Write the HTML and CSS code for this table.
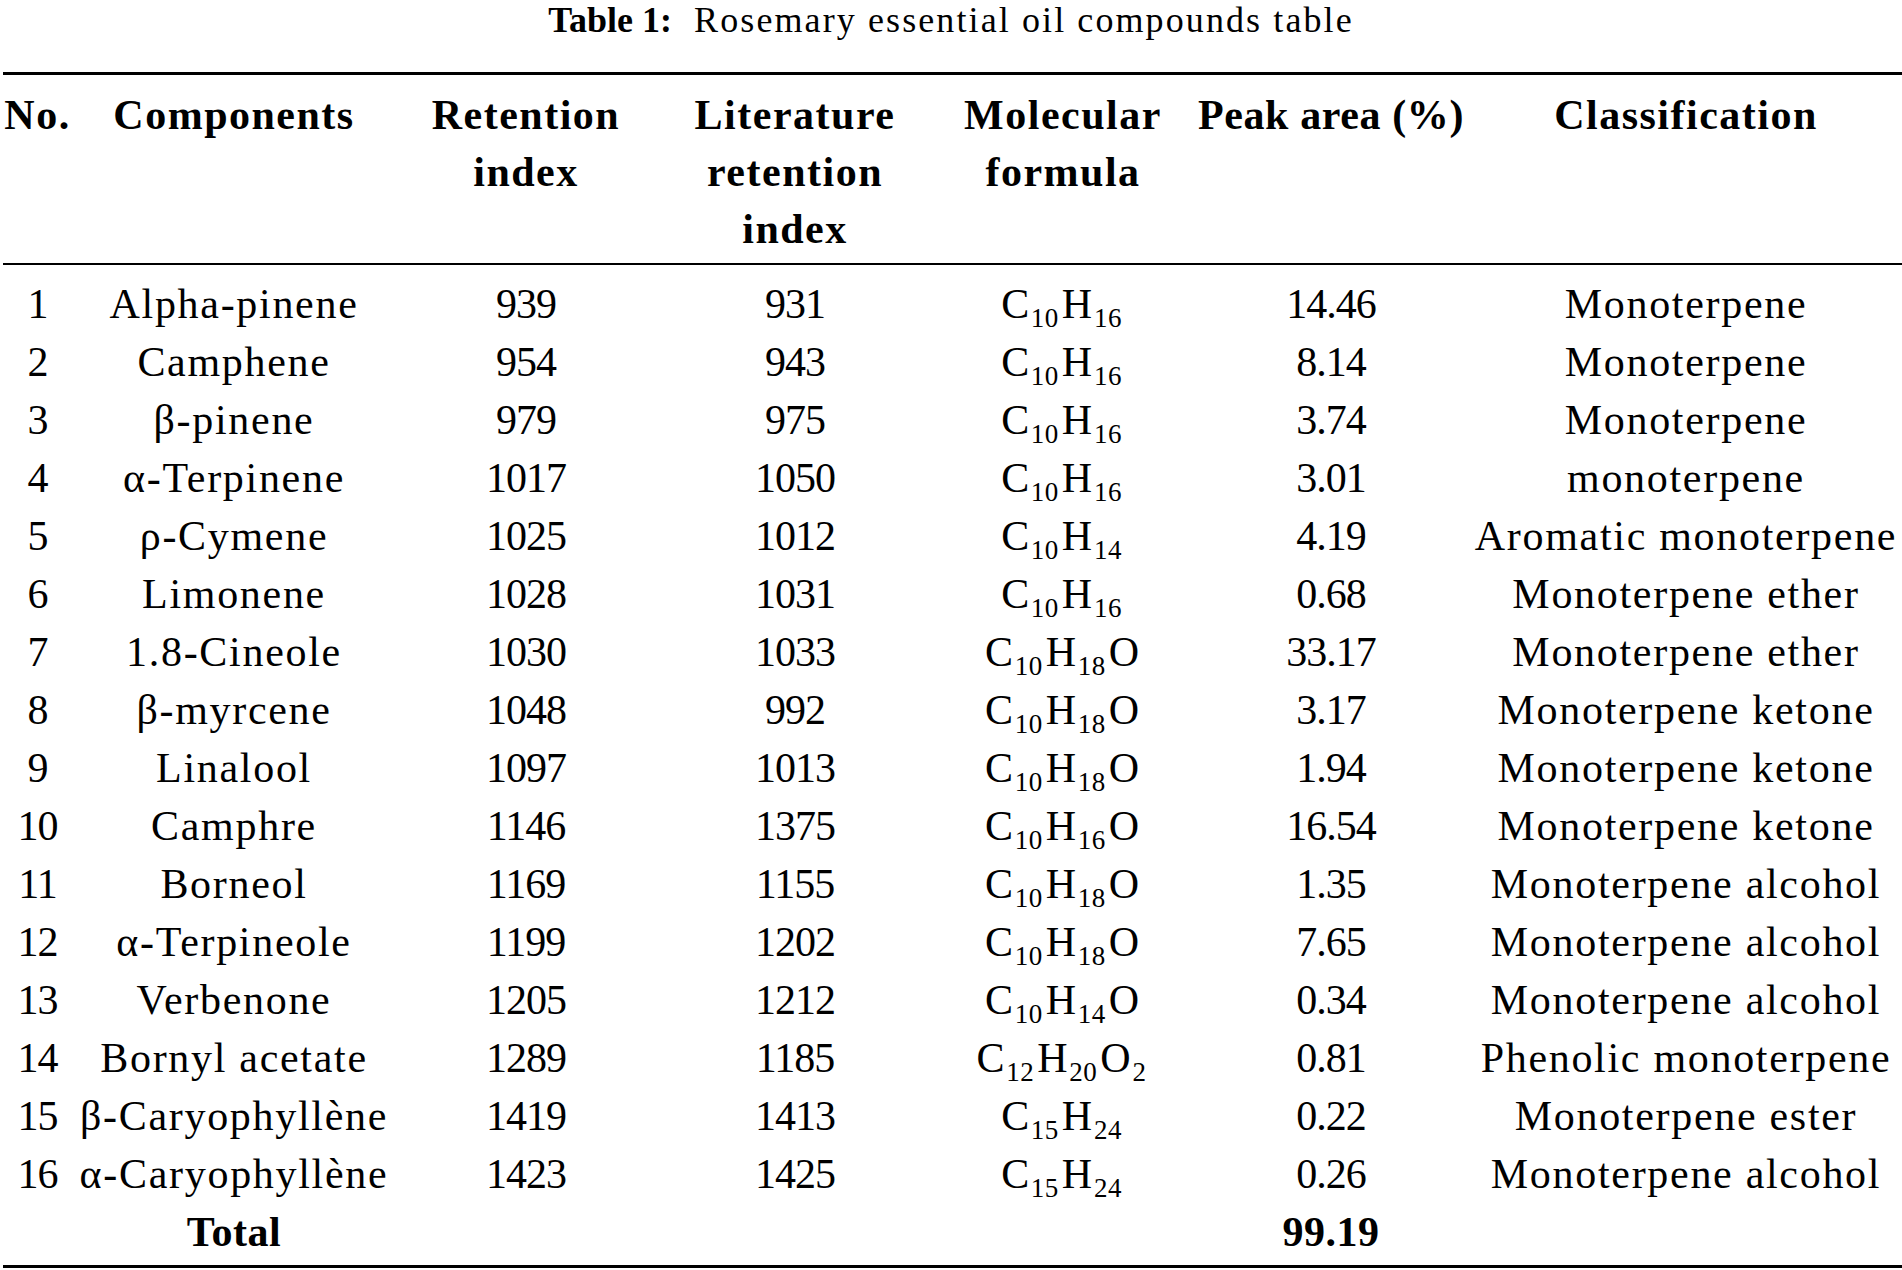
FILE: index.html
```html
<!DOCTYPE html>
<html lang="en">
<head>
<meta charset="utf-8">
<title>Table 1: Rosemary essential oil compounds table</title>
<link rel="stylesheet" href="styles.css">
</head>
<body>
<div class="page">
  <p class="caption"><b class="cap-label">Table 1:</b>&nbsp; Rosemary essential oil compounds table</p>
  <table class="tbl">
    <colgroup>
      <col class="c-no"><col class="c-comp"><col class="c-ri"><col class="c-lri"><col class="c-mf"><col class="c-pa"><col class="c-cl">
    </colgroup>
    <thead>
      <tr>
        <th>No.</th>
        <th>Components</th>
        <th>Retention<br>index</th>
        <th>Literature<br>retention<br>index</th>
        <th>Molecular<br>formula</th>
        <th class="th-peak">Peak area (%)</th>
        <th>Classification</th>
      </tr>
    </thead>
    <tbody>
      <tr><td>1</td><td>Alpha-pinene</td><td>939</td><td>931</td><td>C<sub>10</sub>H<sub>16</sub></td><td>14.46</td><td>Monoterpene</td></tr>
      <tr><td>2</td><td>Camphene</td><td>954</td><td>943</td><td>C<sub>10</sub>H<sub>16</sub></td><td>8.14</td><td>Monoterpene</td></tr>
      <tr><td>3</td><td>β-pinene</td><td>979</td><td>975</td><td>C<sub>10</sub>H<sub>16</sub></td><td>3.74</td><td>Monoterpene</td></tr>
      <tr><td>4</td><td>α-Terpinene</td><td>1017</td><td>1050</td><td>C<sub>10</sub>H<sub>16</sub></td><td>3.01</td><td>monoterpene</td></tr>
      <tr><td>5</td><td>ρ-Cymene</td><td>1025</td><td>1012</td><td>C<sub>10</sub>H<sub>14</sub></td><td>4.19</td><td>Aromatic monoterpene</td></tr>
      <tr><td>6</td><td>Limonene</td><td>1028</td><td>1031</td><td>C<sub>10</sub>H<sub>16</sub></td><td>0.68</td><td>Monoterpene ether</td></tr>
      <tr><td>7</td><td>1.8-Cineole</td><td>1030</td><td>1033</td><td>C<sub>10</sub>H<sub>18</sub>O</td><td>33.17</td><td>Monoterpene ether</td></tr>
      <tr><td>8</td><td>β-myrcene</td><td>1048</td><td>992</td><td>C<sub>10</sub>H<sub>18</sub>O</td><td>3.17</td><td>Monoterpene ketone</td></tr>
      <tr><td>9</td><td>Linalool</td><td>1097</td><td>1013</td><td>C<sub>10</sub>H<sub>18</sub>O</td><td>1.94</td><td>Monoterpene ketone</td></tr>
      <tr><td>10</td><td>Camphre</td><td>1146</td><td>1375</td><td>C<sub>10</sub>H<sub>16</sub>O</td><td>16.54</td><td>Monoterpene ketone</td></tr>
      <tr><td>11</td><td>Borneol</td><td>1169</td><td>1155</td><td>C<sub>10</sub>H<sub>18</sub>O</td><td>1.35</td><td>Monoterpene alcohol</td></tr>
      <tr><td>12</td><td>α-Terpineole</td><td>1199</td><td>1202</td><td>C<sub>10</sub>H<sub>18</sub>O</td><td>7.65</td><td>Monoterpene alcohol</td></tr>
      <tr><td>13</td><td>Verbenone</td><td>1205</td><td>1212</td><td>C<sub>10</sub>H<sub>14</sub>O</td><td>0.34</td><td>Monoterpene alcohol</td></tr>
      <tr><td>14</td><td>Bornyl acetate</td><td>1289</td><td>1185</td><td>C<sub>12</sub>H<sub>20</sub>O<sub>2</sub></td><td>0.81</td><td>Phenolic monoterpene</td></tr>
      <tr><td>15</td><td>β-Caryophyllène</td><td>1419</td><td>1413</td><td>C<sub>15</sub>H<sub>24</sub></td><td>0.22</td><td>Monoterpene ester</td></tr>
      <tr><td>16</td><td>α-Caryophyllène</td><td>1423</td><td>1425</td><td>C<sub>15</sub>H<sub>24</sub></td><td>0.26</td><td>Monoterpene alcohol</td></tr>
      <tr class="total"><td></td><td>Total</td><td></td><td></td><td></td><td>99.19</td><td></td></tr>
    </tbody>
  </table>
</div>
</body>
</html>
```
FILE: styles.css
```css
html, body {
  margin: 0;
  padding: 0;
  background: #ffffff;
  color: #000000;
  font-family: "Liberation Serif", "Times New Roman", serif;
}

.page {
  width: 1902px;
}

.caption {
  margin: 0 0 32px;
  height: 40px;
  line-height: 40px;
  font-size: 36px;
  letter-spacing: 2.1px;
  text-align: center;
  white-space: nowrap;
}

.cap-label {
  font-weight: bold;
  letter-spacing: 0;
}

.tbl {
  border-collapse: separate;
  border-spacing: 0;
  table-layout: fixed;
  width: 1899px;
  margin-left: 3px;
}

.c-no { width: 69px; }
.c-comp { width: 324px; }
.c-ri { width: 260px; }
.c-lri { width: 278px; }
.c-mf { width: 258px; }
.c-pa { width: 278px; }
.c-cl { width: 432px; }

.tbl th {
  font-size: 42px;
  line-height: 57px;
  font-weight: bold;
  letter-spacing: 1.5px;
  text-align: center;
  vertical-align: top;
  white-space: nowrap;
  padding: 12px 0 5px;
  border-top: 3px solid #000;
  border-bottom: 2px solid #000;
}

.tbl th.th-peak {
  letter-spacing: 0.6px;
}

.tbl td {
  font-size: 42px;
  line-height: 58px;
  letter-spacing: 1.7px;
  text-align: center;
  white-space: nowrap;
  padding: 0;
}

.tbl td:nth-child(1),
.tbl td:nth-child(3),
.tbl td:nth-child(4),
.tbl td:nth-child(6) {
  letter-spacing: -1px;
}

.tbl tbody tr:first-child td {
  padding-top: 10px;
}

.tbl tr.total td {
  font-weight: bold;
  letter-spacing: 0.5px;
  padding-bottom: 4px;
  border-bottom: 3px solid #000;
}

.tbl sub {
  font-size: 27px;
  line-height: 0;
  vertical-align: -9px;
  letter-spacing: 0.5px;
  margin-right: 3px;
}
```
